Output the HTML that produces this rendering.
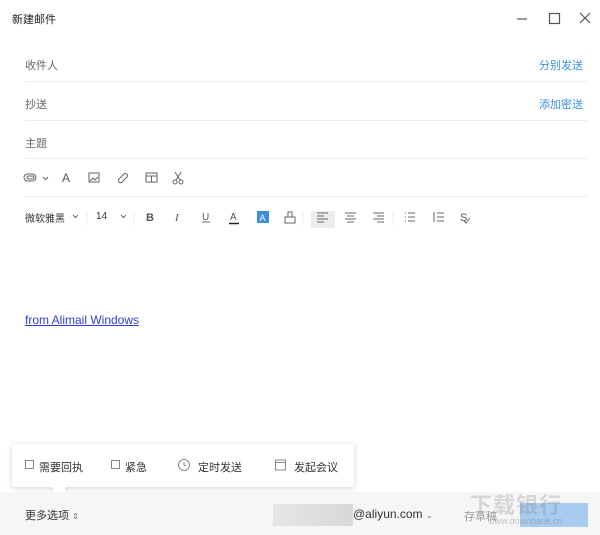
<!DOCTYPE html>
<html><head><meta charset="utf-8"><style>
*{margin:0;padding:0;box-sizing:border-box}
body{width:600px;height:535px;background:#fff;font-family:"Liberation Sans","Noto Sans CJK SC",sans-serif;position:relative;overflow:hidden;color:#333}
.a{position:absolute}
.t{font-size:11px;color:#666}
.hr{position:absolute;left:25px;right:13px;height:1px;background:#ececec}
.blue{color:#3b8ee0;font-size:11px}
</style></head><body>
<div class="a" style="left:12px;top:11px;font-size:11px;color:#222">新建邮件</div>
<svg class="a" style="left:515px;top:12px" width="80" height="14" stroke="#555" fill="none" stroke-width="1.2">
<line x1="2" y1="7" x2="12" y2="7"/><rect x="34.5" y="1.5" width="10" height="10"/><line x1="65" y1="1" x2="75" y2="11"/><line x1="75" y1="1" x2="65" y2="11"/></svg>
<div class="a t" style="left:25px;top:57px">收件人</div>
<div class="a blue" style="left:539px;top:57px">分别发送</div>
<div class="hr" style="top:81px"></div>
<div class="a t" style="left:25px;top:96px">抄送</div>
<div class="a blue" style="left:539px;top:96px">添加密送</div>
<div class="hr" style="top:120px"></div>
<div class="a t" style="left:25px;top:135px">主题</div>
<div class="hr" style="top:158px"></div>
<svg class="a" style="left:22px;top:170px" width="170" height="16" fill="none" stroke="#666" stroke-width="1">
<rect x="2" y="4" width="12" height="7" rx="3.5"/><rect x="5" y="6" width="7" height="3" rx="1.5"/>
<polyline points="21,7 23.5,9.5 26,7"/>
<text x="40" y="12" font-size="12" fill="#555" stroke="none" font-family="Liberation Sans">A</text>
<rect x="67" y="3" width="10" height="9"/><polyline points="68,11 71,8 73,10 76,7"/>
<path d="M97 11 l5-5 a2 2 0 0 1 3 3 l-5 5 a2 2 0 0 1-3-3z" transform="translate(0,-2)"/>
<rect x="124" y="3" width="11" height="9"/><line x1="124" y1="6" x2="135" y2="6"/><line x1="129.5" y1="6" x2="129.5" y2="12"/>
<circle cx="153" cy="12" r="2"/><circle cx="159" cy="12" r="2"/><line x1="153" y1="2" x2="158" y2="10"/><line x1="159" y1="2" x2="154" y2="10"/>
</svg>
<div class="hr" style="top:196px"></div>
<div class="a" style="left:25px;top:210px;font-size:10px;color:#333">微软雅黑</div>
<svg class="a" style="left:70px;top:211px" width="400" height="18" fill="none" stroke="#666" stroke-width="1">
<polyline points="3,4 5.5,6.5 8,4"/>
<line x1="17" y1="-1" x2="17" y2="14" stroke="#eee"/>
<polyline points="51,4 53.5,6.5 56,4"/>
<line x1="64" y1="-1" x2="64" y2="14" stroke="#eee"/>
<text x="76" y="10" font-size="11" font-weight="bold" fill="#555" stroke="none" font-family="Liberation Sans">B</text>
<text x="105" y="10" font-size="11" font-style="italic" fill="#555" stroke="none" font-family="Liberation Serif">I</text>
<text x="132" y="9" font-size="10" fill="#555" stroke="none" font-family="Liberation Sans">U</text><line x1="132" y1="11" x2="140" y2="11"/>
<text x="160" y="9" font-size="10" fill="#555" stroke="none" font-family="Liberation Sans">A</text><line x1="159" y1="12.5" x2="169" y2="12.5" stroke="#222" stroke-width="1.5"/>
<rect x="187" y="0" width="12" height="12" fill="#3b8ee0" stroke="none"/><text x="189.5" y="10" font-size="9" fill="#fff" stroke="none" font-family="Liberation Sans">A</text>
<rect x="215" y="6" width="10" height="6"/><rect x="218" y="1" width="4" height="5"/>
<line x1="233" y1="-1" x2="233" y2="14" stroke="#eee"/>
<rect x="241" y="-6" width="24" height="23" fill="#ececec" stroke="none"/>
<line x1="247" y1="2" x2="258" y2="2"/><line x1="247" y1="5" x2="254" y2="5"/><line x1="247" y1="8" x2="258" y2="8"/><line x1="247" y1="11" x2="254" y2="11"/>
<line x1="275" y1="2" x2="286" y2="2"/><line x1="277" y1="5" x2="284" y2="5"/><line x1="275" y1="8" x2="286" y2="8"/><line x1="277" y1="11" x2="284" y2="11"/>
<line x1="303" y1="2" x2="314" y2="2"/><line x1="307" y1="5" x2="314" y2="5"/><line x1="303" y1="8" x2="314" y2="8"/><line x1="307" y1="11" x2="314" y2="11"/>
<line x1="323" y1="-1" x2="323" y2="14" stroke="#eee"/>
<line x1="335" y1="2" x2="336" y2="2"/><line x1="338" y1="2" x2="345" y2="2"/><line x1="335" y1="6" x2="336" y2="6"/><line x1="338" y1="6" x2="345" y2="6"/><line x1="335" y1="10" x2="336" y2="10"/><line x1="338" y1="10" x2="345" y2="10"/>
<line x1="364" y1="1" x2="364" y2="11"/><line x1="367" y1="2" x2="374" y2="2"/><line x1="367" y1="6" x2="374" y2="6"/><line x1="367" y1="10" x2="374" y2="10"/>
<text x="390" y="10" font-size="11" fill="#555" stroke="none" font-family="Liberation Sans">S</text><polyline points="394,10 396,12 400,7"/>
</svg>
<div class="a" style="left:96px;top:211px;font-size:10px;color:#333">14</div>
<div class="a" style="left:25px;top:313px;font-size:12px;color:#2b3fcc;text-decoration:underline">from Alimail Windows</div>
<div class="a" style="left:12px;top:444px;width:342px;height:43px;background:#fff;box-shadow:0 1px 6px rgba(0,0,0,0.18);border-radius:2px"></div>
<div class="a" style="left:53px;top:480px;width:12px;height:12px;background:#fff;transform:rotate(45deg);box-shadow:2px 2px 3px rgba(0,0,0,0.08)"></div>
<div class="a" style="left:0;top:492px;width:600px;height:43px;background:#f6f6f6"></div>
<div class="a" style="left:53px;top:483px;width:12px;height:9px;background:#fff"></div>
<svg class="a" style="left:24px;top:458px" width="270" height="16" fill="none" stroke="#888" stroke-width="1">
<rect x="1.5" y="2.5" width="8" height="8"/><rect x="87.5" y="2.5" width="8" height="8"/>
<circle cx="160" cy="7" r="5.5"/><polyline points="160,4 160,7 162,8"/>
<rect x="251.5" y="2" width="10" height="10"/><line x1="251.5" y1="4.5" x2="261.5" y2="4.5"/>
</svg>
<div class="a" style="left:39px;top:459px;font-size:11px;color:#333">需要回执</div>
<div class="a" style="left:125px;top:459px;font-size:11px;color:#333">紧急</div>
<div class="a" style="left:198px;top:459px;font-size:11px;color:#333">定时发送</div>
<div class="a" style="left:294px;top:459px;font-size:11px;color:#333">发起会议</div>
<div class="a" style="left:25px;top:507px;font-size:11px;color:#333">更多选项 <span style="font-size:8px;color:#777">⇕</span></div>
<div class="a" style="left:273px;top:504px;width:80px;height:22px;background:linear-gradient(90deg,#e6e6e6,#d8d8d8)"></div>
<div class="a" style="left:353px;top:507px;font-size:12px;color:#333">@aliyun.com <span style="font-size:8px;color:#777">⌄</span></div>
<div class="a" style="left:464px;top:508px;font-size:11px;color:#999">存草稿</div>
<div class="a" style="left:520px;top:503px;width:68px;height:24px;background:#a8ccf0"></div>
<div class="a" style="left:470px;top:488px;font-size:22px;font-weight:bold;color:rgba(120,120,120,0.25);letter-spacing:1px">下载银行</div>
<div class="a" style="left:488px;top:516px;font-size:9px;color:rgba(120,120,120,0.4)">www.downbank.cn</div>
</body></html>
